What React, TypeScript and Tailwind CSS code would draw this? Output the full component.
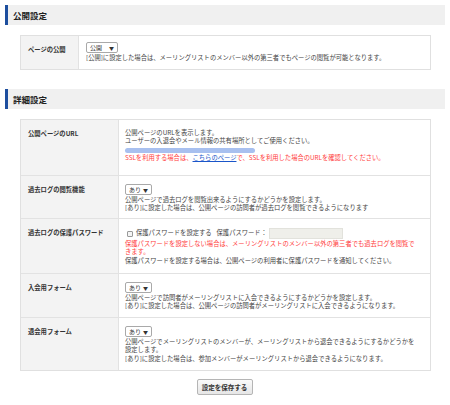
import React from "react";

const Sel = ({ label, w }: { label: string; w: string }) => (
  <div className={`flex items-center justify-between h-[11px] ${w} border border-[#a9a9a9] rounded-[2px] bg-white px-[3px] text-[6px] leading-none text-[#333]`}>
    <span>{label}</span>
    <span className="text-[5px]">▼</span>
  </div>
);

const Header = ({ title }: { title: string }) => (
  <div className="ml-[5px] w-[440px] h-[20px] bg-[#f0f0f0] border-l-[3px] border-[#1d4e9e] flex items-center pl-[5px]">
    <span className="text-[8.5px] font-bold text-[#222] leading-none">{title}</span>
  </div>
);

const Row = ({ label, h, children, last }: { label: string; h: string; children: React.ReactNode; last?: boolean }) => (
  <div className={`grid grid-cols-[98px_1fr] ${h} ${last ? "" : "border-b border-[#e2e2e2]"}`}>
    <div className="bg-[#f3f3f3] border-r border-[#e2e2e2] pl-[7px] pt-[10px] text-[6.3px] font-bold leading-[8px] text-[#333]">{label}</div>
    <div className="pl-[6px] pt-[8px] text-[6.3px] leading-[8.3px] text-[#444]">{children}</div>
  </div>
);

export default function App() {
  return (
    <div className="w-[450px] h-[405px] bg-white font-['Noto_Sans_CJK_JP','Noto_Sans',sans-serif] pt-[5px]">
      <Header title="公開設定" />
      <div className="ml-[20px] mt-[10px] w-[411px] h-[35px] border border-[#e0e0e0] grid grid-cols-[58px_1fr]">
        <div className="bg-[#f3f3f3] border-r border-[#e2e2e2] pl-[7px] pt-[10px] text-[6.3px] font-bold leading-[8px] text-[#333]">ページの公開</div>
        <div className="pl-[7px] pt-[6px] text-[6.3px] leading-[8.3px] text-[#444]">
          <Sel label="公開" w="w-[32px]" />
          <div className="mt-[1px] whitespace-nowrap">[公開]に設定した場合は、メーリングリストのメンバー以外の第三者でもページの閲覧が可能となります。</div>
        </div>
      </div>

      <div className="mt-[19px]">
        <Header title="詳細設定" />
      </div>

      <div className="ml-[20px] mt-[10px] w-[411px] border border-[#e0e0e0]">
        <Row label="公開ページのURL" h="h-[56px]">
          <div className="pt-[1px]">公開ページのURLを表示します。</div>
          <div>ユーザーの入退会やメール情報の共有場所としてご使用ください。</div>
          <div className="h-[8px] pt-[2px]">
            <div className="w-[130px] h-[5px] rounded-[3px] bg-[#a8c0ef]"></div>
          </div>
          <div className="text-[#ff3b3b] whitespace-nowrap">
            SSLを利用する場合は、<span className="text-[#1a55c9] underline">こちらのページ</span>で、SSLを利用した場合のURLを確認してください。
          </div>
        </Row>
        <Row label="過去ログの閲覧機能" h="h-[43px]">
          <Sel label="あり" w="w-[27px]" />
          <div className="mt-[1px]">公開ページで過去ログを閲覧出来るようにするかどうかを設定します。</div>
          <div>[あり]に設定した場合は、公開ページの訪問者が過去ログを閲覧できるようになります</div>
        </Row>
        <Row label="過去ログの保護パスワード" h="h-[55px]">
          <div className="flex items-center h-[11px] mt-[1px] whitespace-nowrap">
            <div className="w-[6px] h-[6px] border border-[#999] bg-[#f4f4f4] rounded-[1px] ml-[2px]" />
            <span className="ml-[3px]">保護パスワードを設定する</span>
            <span className="ml-[5px]">保護パスワード：</span>
            <div className="ml-[2px] w-[74px] h-[11px] bg-[#efefea] border border-[#e2e2dc]" />
          </div>
          <div className="text-[#ff3b3b] mt-[1px] whitespace-nowrap">保護パスワードを設定しない場合は、メーリングリストのメンバー以外の第三者でも過去ログを閲覧で</div>
          <div className="text-[#ff3b3b]">きます。</div>
          <div>保護パスワードを設定する場合は、公開ページの利用者に保護パスワードを通知してください。</div>
        </Row>
        <Row label="入会用フォーム" h="h-[44px]">
          <Sel label="あり" w="w-[27px]" />
          <div className="mt-[1px]">公開ページで訪問者がメーリングリストに入会できるようにするかどうかを設定します。</div>
          <div>[あり]に設定した場合は、公開ページの訪問者がメーリングリストに入会できるようになります。</div>
        </Row>
        <Row label="退会用フォーム" h="h-[52px]" last>
          <Sel label="あり" w="w-[27px]" />
          <div className="mt-[1px] whitespace-nowrap">公開ページでメーリングリストのメンバーが、メーリングリストから退会できるようにするかどうかを</div>
          <div>設定します。</div>
          <div>[あり]に設定した場合は、参加メンバーがメーリングリストから退会できるようになります。</div>
        </Row>
      </div>

      <div className="flex justify-center mt-[8px] pr-[1px]">
        <button className="w-[56px] h-[16px] border border-[#b5b5b5] rounded-[2px] bg-gradient-to-b from-[#fafafa] to-[#e6e6e6] text-[6.5px] font-bold text-[#333] leading-none">
          設定を保存する
        </button>
      </div>
    </div>
  );
}
